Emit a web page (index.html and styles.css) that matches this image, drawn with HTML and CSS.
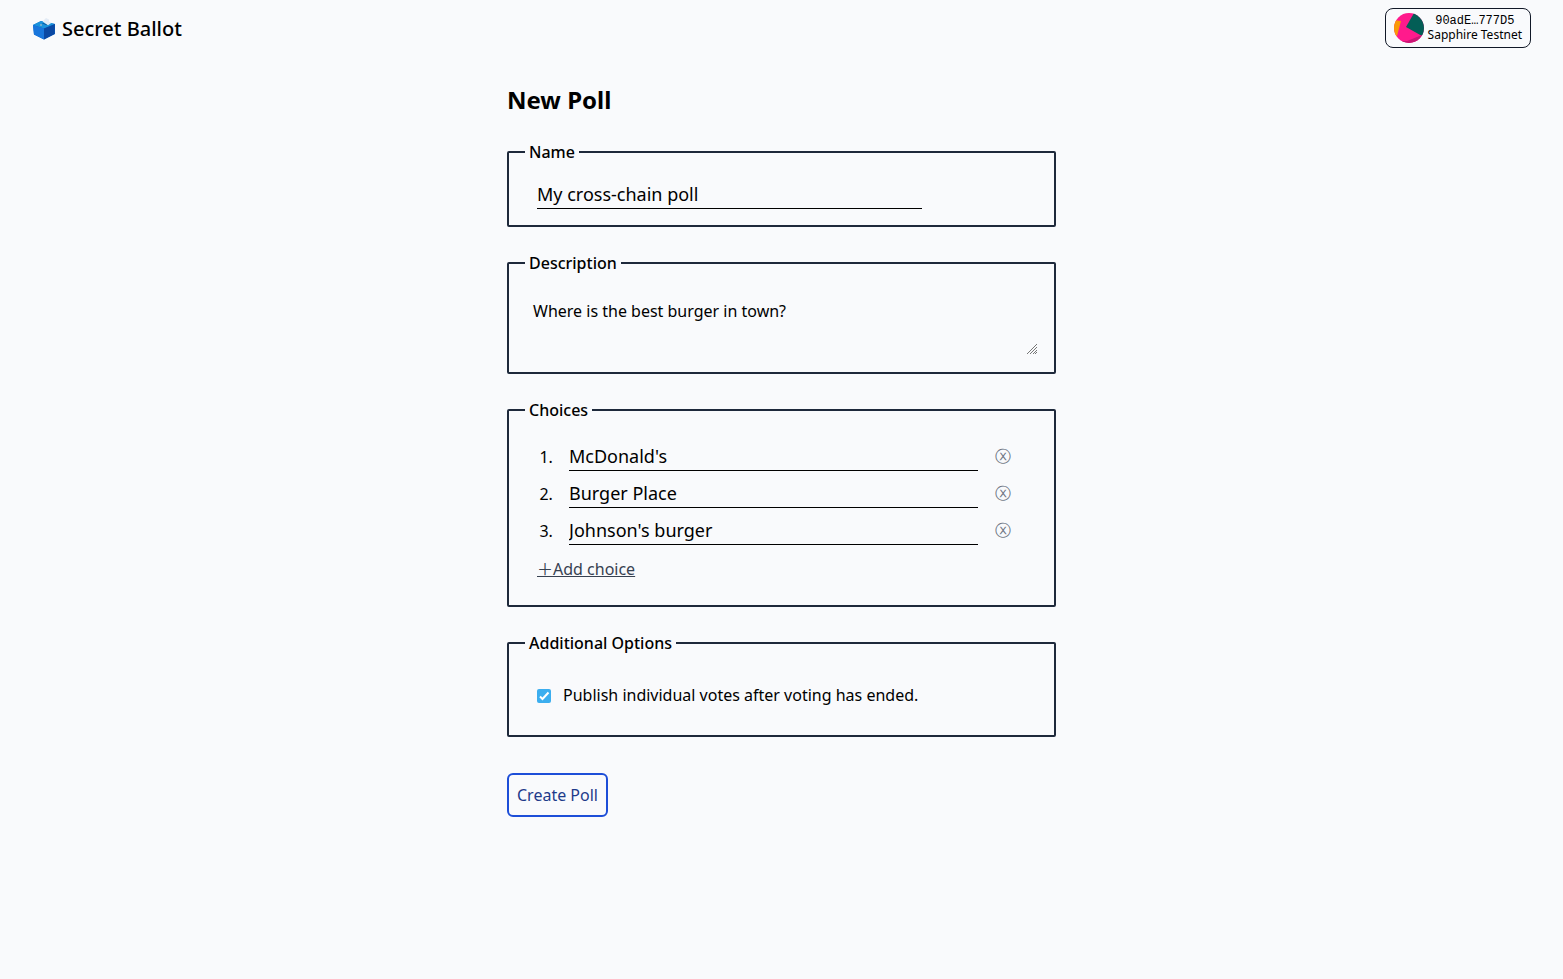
FILE: index.html
```
<!DOCTYPE html>
<html lang="en">
<head>
<meta charset="utf-8">
<meta name="viewport" content="width=device-width, initial-scale=1">
<title>Secret Ballot</title>
<link rel="stylesheet" href="styles.css">
</head>
<body>
<header class="topbar">
  <a class="brand" href="#">
    <svg class="brand-icon" viewBox="0 0 24 24" aria-hidden="true">
      <path d="M1 8 9 4 23 7 23 17 12 22.500 2 17.500Z" fill="#0d62c4"/>
      <path d="M1 8 9 4 23 7 12 11.500Z" fill="#1b93dc"/>
      <path d="M1 8 12 11.500 12 22.500 2 17.500Z" fill="#1976dc"/>
      <path d="M12 11.500 23 7 22.500 17 12 22.500Z" fill="#0b48a3"/>
      <path d="M10 6.500 15 8.300 16 7.700 11 5.900Z" fill="#0b5193"/>
      <path d="M10.500 4.500 14 1 17 2.500 17 4.800 19.500 5.800 16 8.200Z" fill="#e3ebf5"/>
      <circle cx="9" cy="8" r="1" fill="#8fb5c9"/>
    </svg>
    <span>Secret Ballot</span>
  </a>
  <button class="account" type="button">
    <svg class="avatar" viewBox="0 0 30 30" aria-hidden="true">
      <clipPath id="disc"><circle cx="15" cy="15" r="15"/></clipPath>
      <g clip-path="url(#disc)">
        <rect width="30" height="30" fill="#ff1a8c"/>
        <path d="M0 7 7 8 3 23 0 25Z" fill="#f99a07"/>
        <path d="M20 0 12 14 28 23 32 20 32 0Z" fill="#035e56"/>
        <path d="M4 28 13 28 28 22 25 32 4 32Z" fill="#cb1675"/>
      </g>
    </svg>
    <span class="account-text">
      <span class="address">90adE…777D5</span>
      <span>Sapphire Testnet</span>
    </span>
  </button>
</header>
<main class="page">
  <h1>New Poll</h1>
  <form>
    <fieldset>
      <legend>Name</legend>
      <div class="inset"><input class="line-input name-input" type="text" aria-label="Name" value="My cross-chain poll"></div>
    </fieldset>
    <fieldset>
      <legend>Description</legend>
      <textarea rows="2" aria-label="Description">Where is the best burger in town?</textarea>
    </fieldset>
    <fieldset>
      <legend>Choices</legend>
      <ol class="choices">
        <li><div class="choice"><input class="line-input" type="text" aria-label="Choice 1" value="McDonald's"><button class="remove" type="button" aria-label="Remove choice 1">ⓧ</button></div></li>
        <li><div class="choice"><input class="line-input" type="text" aria-label="Choice 2" value="Burger Place"><button class="remove" type="button" aria-label="Remove choice 2">ⓧ</button></div></li>
        <li><div class="choice"><input class="line-input" type="text" aria-label="Choice 3" value="Johnson's burger"><button class="remove" type="button" aria-label="Remove choice 3">ⓧ</button></div></li>
      </ol>
      <button class="add" type="button">＋Add choice</button>
    </fieldset>
    <fieldset>
      <legend>Additional Options</legend>
      <label class="option"><input type="checkbox" checked><span>Publish individual votes after voting has ended.</span></label>
    </fieldset>
    <button class="create" type="submit">Create Poll</button>
  </form>
</main>
</body>
</html>
```
FILE: styles.css
```
*, *::before, *::after { box-sizing: border-box; }

body {
  margin: 0;
  background: #f9fafc;
  color: #000;
  font: 16px/24px "Noto Sans", "Noto Sans CJK SC", sans-serif;
}

button, input, textarea { font: inherit; color: inherit; }
button { background: none; border: 0; padding: 0; cursor: pointer; }

.topbar {
  display: flex;
  justify-content: space-between;
  align-items: center;
  padding: 8px 32px;
}

.brand {
  display: flex;
  align-items: center;
  gap: 6px;
  padding-top: 2px;
  font-size: 20px;
  line-height: 28px;
  font-weight: 500;
  color: inherit;
  text-decoration: none;
}
.brand-icon { width: 24px; height: 24px; }

.account {
  display: flex;
  align-items: center;
  gap: 4px;
  padding: 4px 8px;
  border: 1px solid #111827;
  border-radius: 8px;
}
.avatar { width: 30px; height: 30px; }
.account-text {
  display: flex;
  flex-direction: column;
  align-items: center;
  font-size: 12px;
  line-height: 13px;
}
.address { font-family: "Liberation Mono", monospace; }

.page {
  max-width: 549px;
  margin: 28px auto;
}

h1 {
  margin: 0 0 24px;
  font-size: 24px;
  line-height: 32px;
  font-weight: 700;
}

fieldset {
  margin: 0 0 24px;
  padding: 16px;
  min-width: 0;
  border: 2px solid #1e293b;
  border-radius: 2px;
}
legend { padding: 0 4px; font-weight: 500; }

.inset { display: flex; }
.line-input {
  display: block;
  min-width: 0;
  height: 29px;
  padding: 0;
  border: 0;
  border-bottom: 1px solid #000;
  border-radius: 0;
  background: transparent;
  font-size: 18px;
  line-height: 28px;
  outline: none;
}
.name-input { width: 75%; margin-left: 12px; }

textarea {
  display: block;
  width: 100%;
  height: 65px;
  padding: 8px;
  border: 0;
  background: transparent;
  resize: both;
  outline: none;
}
textarea::-webkit-resizer {
  background: url("data:image/svg+xml,%3Csvg xmlns='http://www.w3.org/2000/svg' width='15' height='15' viewBox='0 0 15 15'%3E%3Cpath d='M4 13 14 3M7 13 14 6M10 13 14 9M12 13 14 11' fill='none' stroke='%23777' stroke-width='1'/%3E%3C/svg%3E") no-repeat right bottom;
}

.choices { margin: 0; padding: 0 12px 0 32px; }
.choices li { padding: 4px 0 4px 12px; }
.choice { display: flex; align-items: center; }
.choice .line-input { flex: 1; }
.remove {
  width: 48px;
  padding-left: 2px;
  font-family: "DejaVu Sans", sans-serif;
  color: #6b7280;
}

.add {
  display: block;
  margin: 8px 12px;
  color: #374151;
  text-decoration: underline;
}

.option {
  display: flex;
  align-items: center;
  gap: 12px;
  padding: 12px;
}
.option input {
  appearance: none;
  width: 14px;
  height: 14px;
  margin: 2px 0 0;
  border-radius: 2px;
  background: #3caeef url("data:image/svg+xml,%3Csvg xmlns='http://www.w3.org/2000/svg' viewBox='0 0 14 14'%3E%3Cpath d='M3 7.500 5.500 10 11.500 3.500' fill='none' stroke='white' stroke-width='2'/%3E%3C/svg%3E") center / 14px;
}

.create {
  margin-top: 12px;
  padding: 8px;
  border: 2px solid #1d4ed8;
  border-radius: 6px;
  color: #1e3a8a;
}
```
